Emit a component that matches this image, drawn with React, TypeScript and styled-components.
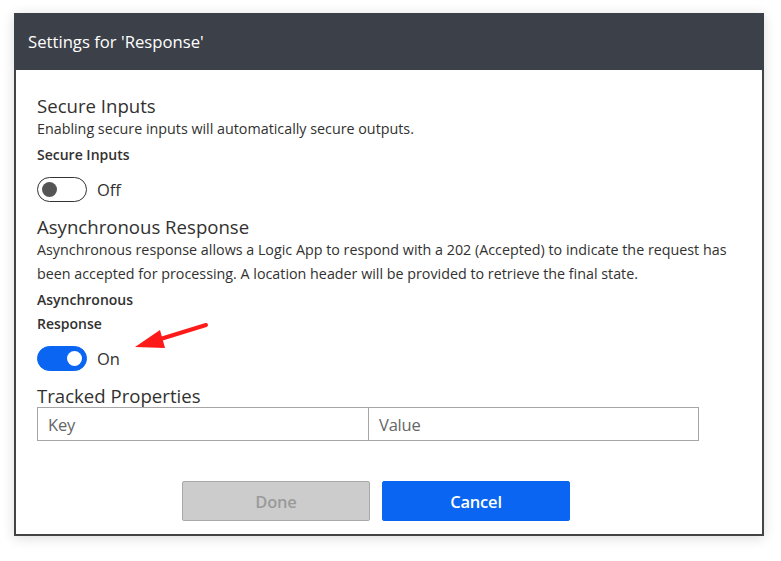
import styled, { createGlobalStyle } from "styled-components";

const GlobalStyle = createGlobalStyle`
  html, body {
    margin: 0;
    padding: 0;
    background: #ffffff;
  }
  body {
    font-family: "Open Sans", "Noto Sans", sans-serif;
    color: #323130;
  }
`;

const Page = styled.div`
  position: relative;
  padding: 13px 0 0 14px;
  width: 781px;
  height: 561px;
  box-sizing: border-box;
`;

const Dialog = styled.div`
  width: 750px;
  height: 523px;
  box-sizing: border-box;
  border: 2px solid #444444;
  border-top: 0;
  background: #ffffff;
  box-shadow: 0 2px 12px rgba(0, 0, 0, 0.14);
  display: flex;
  flex-direction: column;
`;

const Header = styled.div`
  height: 57px;
  background: #3c4048;
  margin: 0 -2px;
  padding-left: 14px;
  display: flex;
  align-items: center;
  color: #ffffff;
  font-size: 16.7px;
`;

const Body = styled.div`
  padding: 25px 21px 0 21px;
  display: flex;
  flex-direction: column;
`;

const SectionTitle = styled.div`
  font-size: 18.6px;
  line-height: 22px;
  color: #323130;
`;

const Description = styled.div`
  font-size: 14.3px;
  line-height: 24px;
  color: #323130;
`;

const FieldLabel = styled.div`
  font-size: 14px;
  font-weight: 600;
  line-height: 24px;
  max-width: 110px;
  margin-top: 2px;
  color: #323130;
`;

const ToggleRow = styled.div`
  display: flex;
  align-items: center;
  gap: 10px;
  height: 25px;
  margin: 10px 0 14px 0;
`;

const Track = styled.span<{ $on: boolean }>`
  width: 50px;
  height: 25px;
  box-sizing: border-box;
  border-radius: 13px;
  border: 1.5px solid ${(p) => (p.$on ? "#0a66f2" : "#333333")};
  background: ${(p) => (p.$on ? "#0a66f2" : "#ffffff")};
  display: flex;
  align-items: center;
  justify-content: ${(p) => (p.$on ? "flex-end" : "flex-start")};
  padding: 0 4px;
`;

const Knob = styled.span<{ $on: boolean }>`
  width: 15px;
  height: 15px;
  border-radius: 50%;
  background: ${(p) => (p.$on ? "#ffffff" : "#555555")};
`;

const ToggleText = styled.span`
  font-size: 16.5px;
  color: #323130;
`;

const Table = styled.div`
  display: grid;
  grid-template-columns: 330px 331px;
  width: 662px;
  height: 34px;
  box-sizing: border-box;
  border: 1px solid #a6a6a6;
`;

const Cell = styled.div<{ $divider?: boolean }>`
  display: flex;
  align-items: center;
  padding-left: 10px;
  font-size: 16.5px;
  color: #666666;
  letter-spacing: -0.2px;
  border-left: ${(p) => (p.$divider ? "1px solid #a6a6a6" : "0")};
`;

const Footer = styled.div`
  display: flex;
  gap: 12px;
  padding-left: 145px;
  margin-top: 40px;
`;

const Button = styled.button<{ $primary?: boolean }>`
  width: 188px;
  height: 40px;
  border-radius: 2px;
  font-family: "Open Sans", "Noto Sans", sans-serif;
  font-size: 16.5px;
  font-weight: 600;
  letter-spacing: -0.2px;
  border: 1px solid ${(p) => (p.$primary ? "#0a66f2" : "#a8a8a8")};
  background: ${(p) => (p.$primary ? "#0a66f2" : "#cccccc")};
  color: ${(p) => (p.$primary ? "#ffffff" : "#9a9a9a")};
`;

const Arrow = styled.svg`
  position: absolute;
  left: 130px;
  top: 318px;
`;

const Toggle = ({ on }: { on: boolean }) => (
  <ToggleRow>
    <Track $on={on}>
      <Knob $on={on} />
    </Track>
    <ToggleText>{on ? "On" : "Off"}</ToggleText>
  </ToggleRow>
);

export default function App() {
  return (
    <>
      <GlobalStyle />
      <Page>
        <Dialog>
          <Header>Settings for 'Response'</Header>
          <Body>
            <SectionTitle>Secure Inputs</SectionTitle>
            <Description>Enabling secure inputs will automatically secure outputs.</Description>
            <FieldLabel>Secure Inputs</FieldLabel>
            <Toggle on={false} />
            <SectionTitle>Asynchronous Response</SectionTitle>
            <Description>
              Asynchronous response allows a Logic App to respond with a 202 (Accepted) to indicate the request has
              been accepted for processing. A location header will be provided to retrieve the final state.
            </Description>
            <FieldLabel>Asynchronous Response</FieldLabel>
            <Toggle on={true} />
            <SectionTitle>Tracked Properties</SectionTitle>
            <Table>
              <Cell>Key</Cell>
              <Cell $divider>Value</Cell>
            </Table>
            <Footer>
              <Button disabled>Done</Button>
              <Button $primary>Cancel</Button>
            </Footer>
          </Body>
        </Dialog>
        <Arrow width="80" height="34" viewBox="0 0 80 34">
          <line x1="76" y1="7" x2="24" y2="23" stroke="#ff1a1a" strokeWidth="4" strokeLinecap="round" />
          <polygon points="5,29 30,12 35,30" fill="#ff1a1a" />
        </Arrow>
      </Page>
    </>
  );
}
